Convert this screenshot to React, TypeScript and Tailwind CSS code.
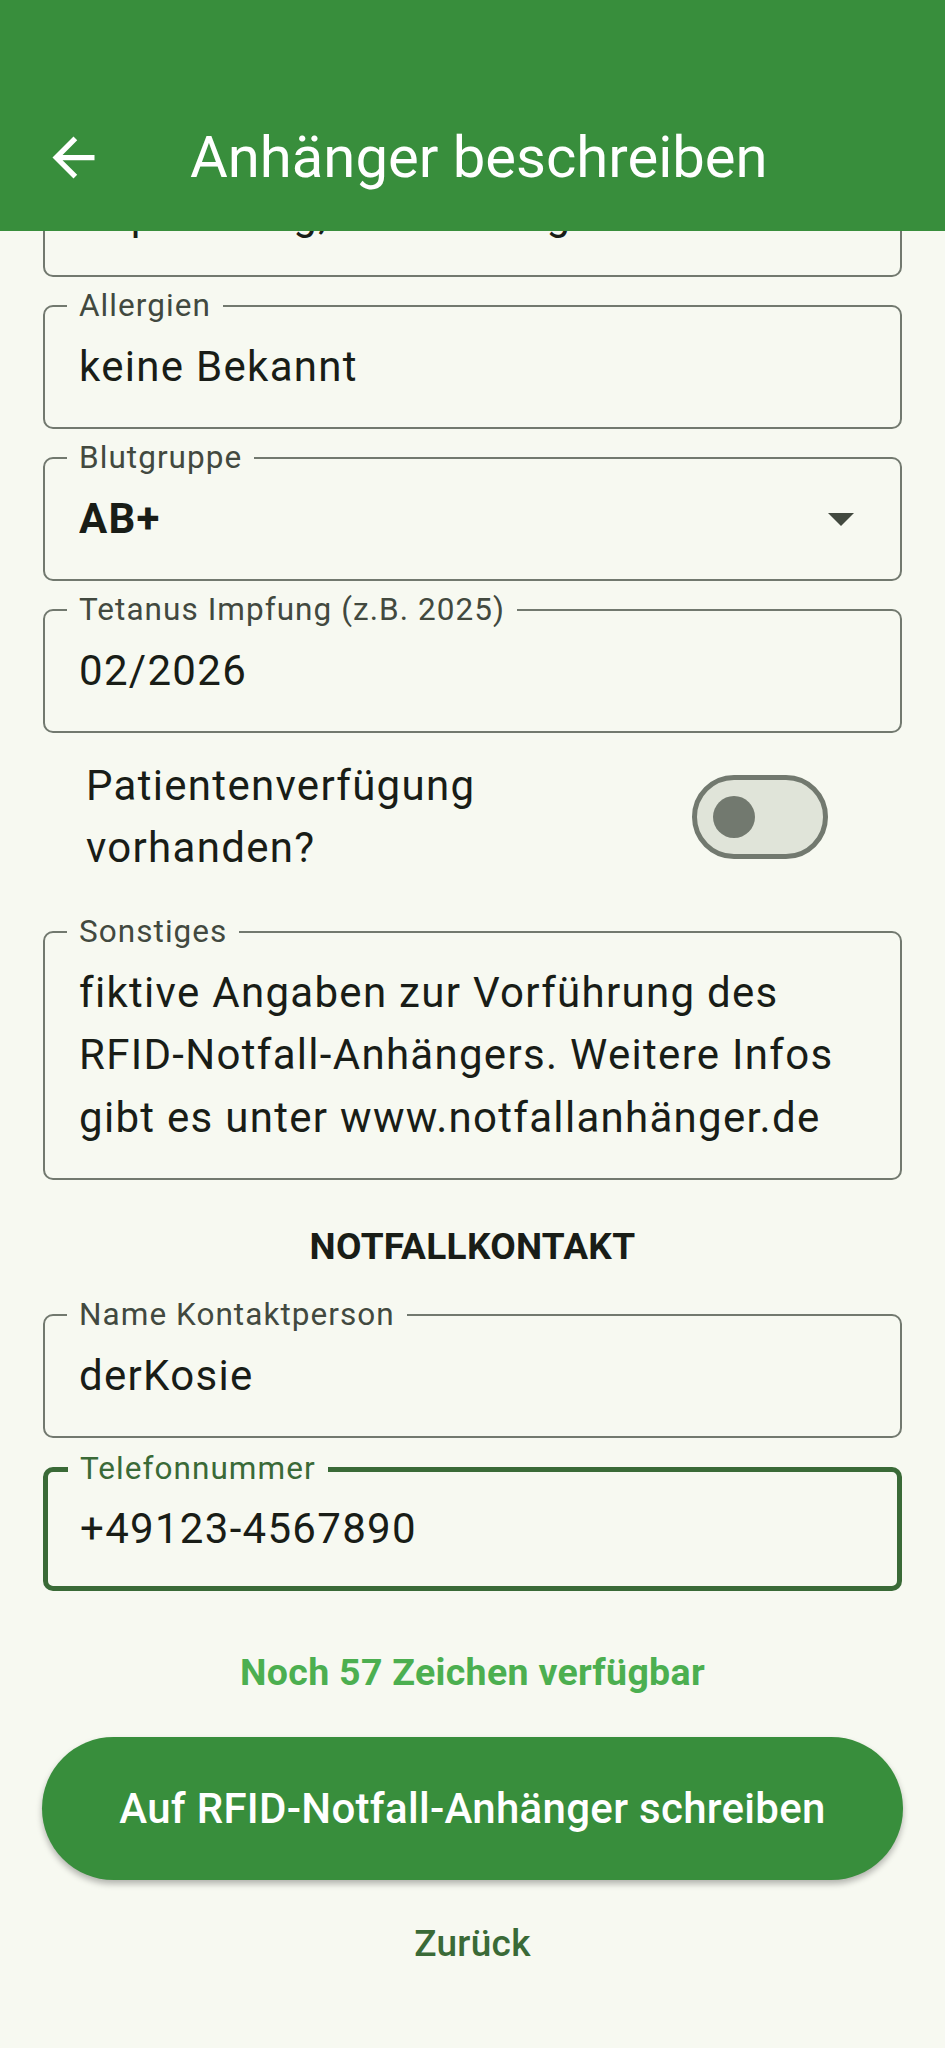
import React from 'react';

const BG = 'bg-[#f7f9f1]';

interface FieldProps {
    label?: string;
    value: string;
    focused?: boolean;
    dropdown?: boolean;
    className?: string;
}

function OutlinedField({ label, value, focused, dropdown, className = '' }: FieldProps) {
    return (
        <div
            className={`relative flex h-[124px] items-center rounded-[10px] ${
                focused ? 'border-[5px] border-[#3a6a37] pl-[32px]' : 'border-[2.5px] border-[#72796f] pl-[34px]'
            } ${dropdown ? 'pr-[46px]' : 'pr-[34px]'} ${className}`}
        >
            {label && (
                <span
                    className={`absolute ${focused ? 'left-[20px] -top-[19px] text-[#3a6a37]' : 'left-[22px] -top-[17px] text-[#42493f]'} ${BG} px-[12px] text-[31.5px] leading-[31px] tracking-[1.05px] whitespace-nowrap`}
                >
                    {label}
                </span>
            )}
            <span
                className={`min-w-0 flex-1 truncate text-[42px] leading-[62px] tracking-[1.3px] text-[#191d17] ${
                    dropdown ? 'font-bold' : ''
                }`}
            >
                {value}
            </span>
            {dropdown && (
                <svg width="26" height="13" viewBox="0 0 10 5" className="shrink-0">
                    <path d="M0 0l5 5 5-5z" fill="#42493f" />
                </svg>
            )}
        </div>
    );
}

export default function App() {
    return (
        <div className={`relative min-h-[2048px] w-full overflow-hidden ${BG} font-['Roboto',sans-serif]`}>
            {/* top app bar lies over the scrolled form */}
            <header className="absolute inset-x-0 top-0 z-10 flex h-[231px] flex-col bg-[#388e3c]">
                <div className="h-[84px]" />
                <div className="flex h-[147px] items-center">
                    <button type="button" className="ml-[42px] flex h-[63px] w-[63px] items-center justify-center">
                        <svg width="63" height="63" viewBox="0 0 24 24">
                            <path d="M20 11H7.83l5.59-5.59L12 4l-8 8 8 8 1.41-1.41L7.83 13H20v-2z" fill="#ffffff" />
                        </svg>
                    </button>
                    <h1 className="ml-[85px] text-[58px] leading-[1.2] font-normal text-white">Anhänger beschreiben</h1>
                </div>
            </header>

            <main className="flex flex-col px-[43px] pt-[153px]">
                {/* field scrolled under the app bar, only its lower edge shows */}
                <OutlinedField value="Aspirin 1mg, Insulin 1mg" />
                <OutlinedField label="Allergien" value="keine Bekannt" className="mt-[28px]" />
                <OutlinedField label="Blutgruppe" value="AB+" dropdown className="mt-[28px]" />
                <OutlinedField label="Tetanus Impfung (z.B. 2025)" value="02/2026" className="mt-[28px]" />

                <div className="mt-[22px] flex items-center gap-[16px] pl-[43px] pr-[74px]">
                    <p className="min-w-0 flex-1 text-[42px] leading-[62px] tracking-[1.3px] text-[#191d17]">
                        Patientenverfügung vorhanden?
                    </p>
                    <div className="flex h-[84px] w-[136px] shrink-0 items-center rounded-full border-[5px] border-[#72796f] bg-[#e0e4d9] pl-[16px]">
                        <div className="h-[42px] w-[42px] rounded-full bg-[#72796f]" />
                    </div>
                </div>

                <div className="relative mt-[52px] flex h-[249px] items-center rounded-[10px] border-[2.5px] border-[#72796f] pl-[34px] pr-[34px]">
                    <span className={`absolute left-[22px] -top-[17px] ${BG} px-[12px] text-[31.5px] leading-[31px] tracking-[1.05px] text-[#42493f]`}>
                        Sonstiges
                    </span>
                    <p className="text-[42px] leading-[62.5px] tracking-[1.3px] text-[#191d17]">
                        fiktive Angaben zur Vorführung des RFID-Notfall-Anhängers. Weitere Infos gibt es unter www.notfallanhänger.de
                    </p>
                </div>

                <h2 className="mt-[45px] text-center text-[37px] leading-[44px] font-bold tracking-[0.3px] text-[#191d17]">
                    NOTFALLKONTAKT
                </h2>

                <OutlinedField label="Name Kontaktperson" value="derKosie" className="mt-[45px]" />
                <OutlinedField label="Telefonnummer" value="+49123-4567890" focused className="mt-[29px] h-[123px]" />

                <p className="mt-[59px] text-center text-[37.5px] leading-[44px] font-bold tracking-[0.3px] text-[#4caf50]">
                    Noch 57 Zeichen verfügbar
                </p>

                <button
                    type="button"
                    className="mt-[43px] -mx-px h-[143px] rounded-full bg-[#388e3c] text-[42px] font-medium tracking-[0.3px] text-white shadow-[0_4px_6px_rgba(0,0,0,0.28)]"
                >
                    Auf RFID-Notfall-Anhänger schreiben
                </button>

                <button type="button" className="mx-auto mt-[42px] text-[37px] leading-[44px] font-medium tracking-[0.3px] text-[#3a6a37]">
                    Zurück
                </button>
            </main>
        </div>
    );
}
